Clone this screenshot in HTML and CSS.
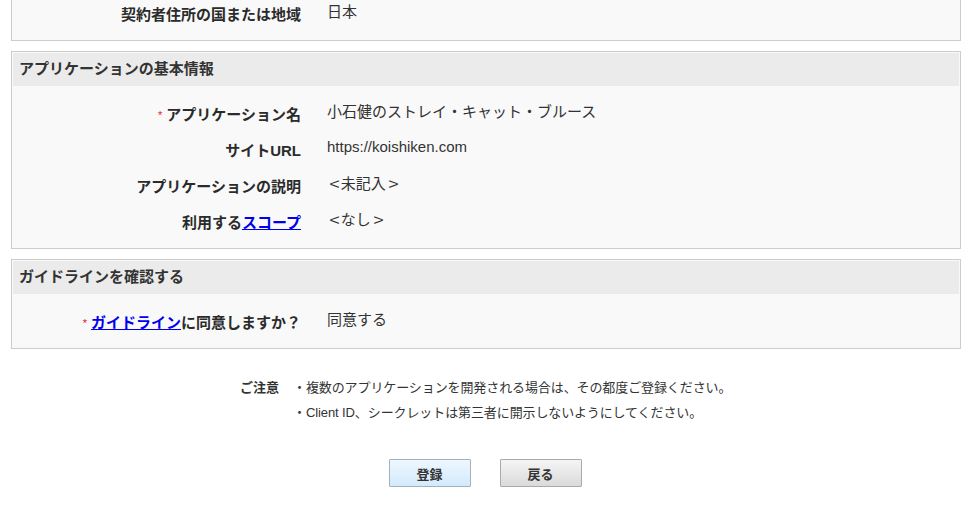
FILE: index.html
```html
<!DOCTYPE html>
<html lang="ja">
<head>
<meta charset="utf-8">
<title>アプリケーション登録確認</title>
<link rel="stylesheet" href="styles.css">
</head>
<body>
<div class="page">
  <section class="box box-first">
    <div class="box-body">
      <div class="row">
        <div class="label">契約者住所の国または地域</div>
        <div class="value">日本</div>
      </div>
    </div>
  </section>

  <section class="box">
    <h2 class="box-head">アプリケーションの基本情報</h2>
    <div class="box-body">
      <div class="row">
        <div class="label"><span class="req">*</span>アプリケーション名</div>
        <div class="value">小石健のストレイ・キャット・ブルース</div>
      </div>
      <div class="row">
        <div class="label">サイトURL</div>
        <div class="value latin">https://koishiken.com</div>
      </div>
      <div class="row">
        <div class="label">アプリケーションの説明</div>
        <div class="value"><span class="br">&lt;</span>未記入<span class="br">&gt;</span></div>
      </div>
      <div class="row">
        <div class="label">利用する<a href="#">スコープ</a></div>
        <div class="value"><span class="br">&lt;</span>なし<span class="br">&gt;</span></div>
      </div>
    </div>
  </section>

  <section class="box">
    <h2 class="box-head">ガイドラインを確認する</h2>
    <div class="box-body">
      <div class="row">
        <div class="label"><span class="req">*</span><a href="#">ガイドライン</a>に同意しますか？</div>
        <div class="value">同意する</div>
      </div>
    </div>
  </section>

  <div class="notes">
    <div class="notes-title">ご注意</div>
    <ul class="notes-list">
      <li>・複数のアプリケーションを開発される場合は、その都度ご登録ください。</li>
      <li>・Client ID、シークレットは第三者に開示しないようにしてください。</li>
    </ul>
  </div>

  <div class="actions">
    <button class="btn btn-primary" type="button">登録</button>
    <button class="btn btn-back" type="button">戻る</button>
  </div>
</div>
</body>
</html>
```

FILE: styles.css
```css
* { box-sizing: border-box; }

html, body {
  margin: 0;
  padding: 0;
  background: #ffffff;
}

body {
  font-family: "Liberation Sans", "Noto Sans CJK JP", sans-serif;
  color: #333333;
  overflow: hidden;
}

.page {
  width: 950px;
  margin-left: 11px;
}

.box {
  border: 1px solid #cccccc;
  background: #f9f9f9;
  padding: 1px;
  margin: 10px 0 0 0;
}

.box-first {
  margin-top: -16px;
}

.box-head {
  margin: 0;
  height: 33px;
  line-height: 32px;
  background: #ebebeb;
  padding-left: 6px;
  font-size: 15px;
  font-weight: bold;
  color: #333333;
}

.box-body {
  padding: 16px 0 1px 0;
}

.row {
  display: grid;
  grid-template-columns: 288px 1fr;
  column-gap: 26px;
  height: 36px;
  align-items: start;
}

.label {
  text-align: right;
  font-size: 15px;
  font-weight: bold;
  line-height: 20px;
  padding-top: 3px;
  color: #2b2b2b;
}

.label a {
  color: #0000ee;
  text-decoration: underline;
}

.req {
  color: #e8102c;
  font-size: 11px;
  font-weight: normal;
  vertical-align: 1px;
  margin-right: 4px;
}

.value {
  font-size: 15px;
  line-height: 20px;
  color: #333333;
}

.value.latin {
  line-height: 18px;
}

.br {
  display: inline-block;
  padding: 0 2px 0 3px;
  transform: scaleX(1.2);
}

.notes {
  display: flex;
  margin-top: 26px;
  padding-left: 229px;
  font-size: 13px;
  line-height: 25px;
}

.notes-title {
  font-weight: bold;
  width: 53px;
}

.notes-list {
  list-style: none;
  margin: 0;
  padding: 0;
  letter-spacing: -0.1px;
}

.actions {
  display: flex;
  justify-content: center;
  gap: 29px;
  margin-top: 34px;
  padding-right: 2px;
}

.btn {
  width: 82px;
  height: 28px;
  font-family: "Liberation Sans", "Noto Sans CJK JP", sans-serif;
  font-size: 13px;
  font-weight: bold;
  color: #333333;
  border-radius: 1px;
  padding: 0;
  cursor: pointer;
}

.btn-primary {
  border: 1px solid #a3b0bd;
  background: linear-gradient(#eef7ff, #d3eafc);
}

.btn-back {
  border: 1px solid #aaaaaa;
  background: linear-gradient(#f5f5f5, #dadada);
}
```
